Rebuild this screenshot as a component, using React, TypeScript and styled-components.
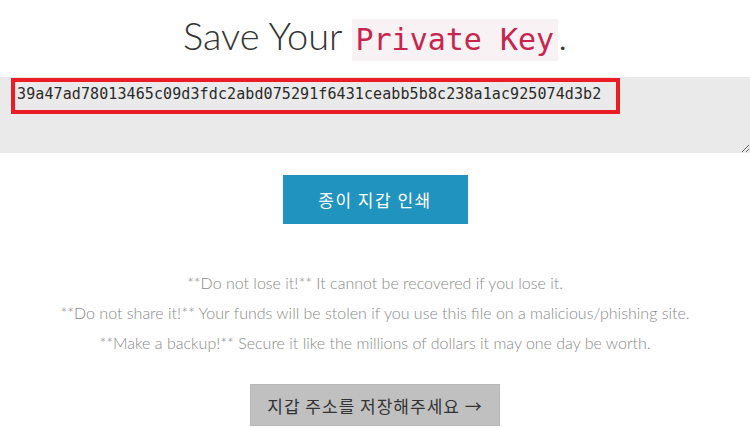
import React from 'react';
import styled, { createGlobalStyle } from 'styled-components';

const GlobalStyle = createGlobalStyle`
  html, body {
    margin: 0;
    padding: 0;
    background: #ffffff;
    font-family: Lato, "Open Sans", "Noto Sans CJK KR", sans-serif;
  }
  * {
    box-sizing: border-box;
  }
`;

const PRIVATE_KEY =
  '39a47ad78013465c09d3fdc2abd075291f6431ceabb5b8c238a1ac925074d3b2';

const Page = styled.div`
  width: 750px;
  height: 428px;
  overflow: hidden;
  display: flex;
  flex-direction: column;
  align-items: center;
`;

const Title = styled.h1`
  margin: 0;
  height: 77px;
  padding-top: 14px;
  display: flex;
  align-items: baseline;
  justify-content: center;
  font-family: Lato, sans-serif;
  font-weight: 300;
  font-size: 38px;
  color: #333333;
  line-height: 42px;
`;

const Code = styled.code`
  display: inline-block;
  margin-left: 9px;
  padding: 0 4px;
  background: #f9f2f4;
  color: #c7254e;
  font-family: "DejaVu Sans Mono", "Liberation Mono", monospace;
  font-size: 30px;
  line-height: 42px;
`;

const KeyField = styled.div`
  position: relative;
  width: 100%;
  height: 76px;
`;

const KeyArea = styled.textarea`
  display: block;
  width: 100%;
  height: 76px;
  margin: 0;
  padding: 7px 17px;
  border: none;
  outline: none;
  background: #eaeaea;
  color: #2a2a2a;
  font-family: "DejaVu Sans Mono", "Liberation Mono", monospace;
  font-size: 15px;
  letter-spacing: 0.1px;
  line-height: 20px;
  resize: vertical;
`;

const Highlight = styled.div`
  position: absolute;
  left: 11px;
  top: 1px;
  width: 609px;
  height: 36px;
  border: 4px solid #ed1c24;
  pointer-events: none;
`;

const PrintButton = styled.button`
  margin-top: 22px;
  width: 185px;
  height: 49px;
  border: none;
  background: #2193bf;
  color: #ffffff;
  font-family: "Noto Sans CJK KR", sans-serif;
  font-size: 17px;
  letter-spacing: 1.5px;
  cursor: pointer;
`;

const Warnings = styled.div`
  margin-top: 44px;
  text-align: center;
  font-family: Lato, sans-serif;
  font-weight: 300;
  font-size: 16px;
  line-height: 30px;
  color: #8a8a8a;
`;

const ContinueButton = styled.button`
  margin-top: 26px;
  width: 250px;
  height: 42px;
  border: 1px solid #b8b8b8;
  background: #c0c0c0;
  color: #333333;
  font-family: "Noto Sans CJK KR", sans-serif;
  font-size: 17px;
  letter-spacing: 1px;
  cursor: pointer;
`;

const warnings = [
  '**Do not lose it!** It cannot be recovered if you lose it.',
  '**Do not share it!** Your funds will be stolen if you use this file on a malicious/phishing site.',
  '**Make a backup!** Secure it like the millions of dollars it may one day be worth.',
];

export default function App() {
  return (
    <>
      <GlobalStyle />
      <Page>
        <Title>
          Save Your <Code>Private Key</Code>.
        </Title>
        <KeyField>
          <KeyArea readOnly value={PRIVATE_KEY} />
          <Highlight />
        </KeyField>
        <PrintButton>종이 지갑 인쇄</PrintButton>
        <Warnings>
          {warnings.map((line) => (
            <div key={line}>{line}</div>
          ))}
        </Warnings>
        <ContinueButton>지갑 주소를 저장해주세요 →</ContinueButton>
      </Page>
    </>
  );
}
